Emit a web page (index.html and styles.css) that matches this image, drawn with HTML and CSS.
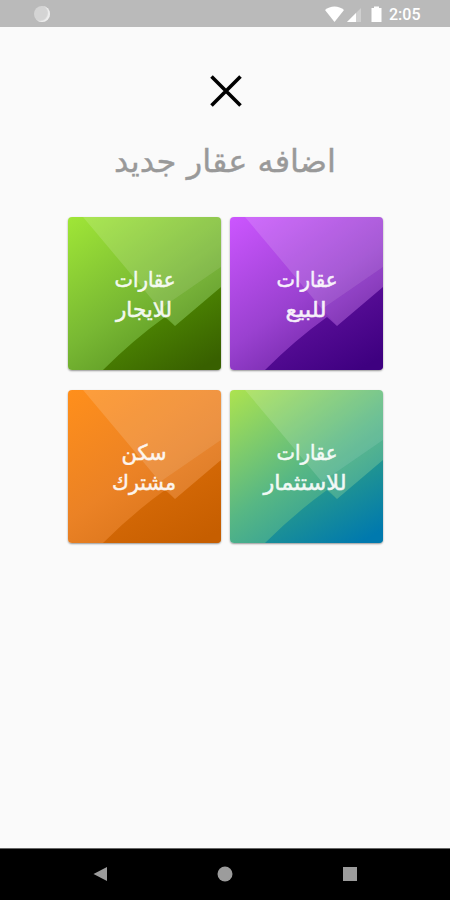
FILE: index.html
```html
<!DOCTYPE html>
<html lang="ar">
<head>
<meta charset="utf-8">
<title>اضافه عقار جديد</title>
<link rel="stylesheet" href="styles.css">
</head>
<body>
<header class="status">
  <span class="sync"></span>
  <svg class="signals" width="56" height="20" viewBox="0 0 56 20"><path class="wifi" d="M0 5C5 .3 14 .3 19 5L9.500 17Z"/><path class="faint" d="M22 17L36 3V17Z"/><path d="M22 17L31 8V17Z"/><path d="M46.500 3H49V1.500H54V3H56.500V17H46.500Z"/></svg>
  <span class="time">2:05</span>
</header>
<main class="content">
  <svg class="close" width="34" height="34" viewBox="0 0 34 34"><path d="M2.500 2.500L31.500 31.500M31.500 2.500L2.500 31.500"/></svg>
  <h1 class="title"><svg width="221" height="50"><text x="110" y="32" textLength="222" lengthAdjust="spacingAndGlyphs">اضافه عقار جديد</text></svg></h1>
  <div class="grid">
    <svg class="card green" viewBox="0 0 153 153"><defs><linearGradient id="g1" x1="0" y1="0" x2=".8" y2="1"><stop offset=".25" stop-color="#528f03"/><stop offset="1" stop-color="#386000"/></linearGradient></defs><path fill="url(#g1)" d="M35 153Q65 123 97 100L107 109L153 70V153Z"/><path class="light" d="M15 0H153V50L92 92L57 50Z"/><path class="mid" d="M92 92L107 109L153 70V50Z"/>
      <text x="77" y="69.500" textLength="61" lengthAdjust="spacingAndGlyphs">عقارات</text><text x="76" y="100" textLength="56" lengthAdjust="spacingAndGlyphs">للايجار</text></svg>
    <svg class="card purple" viewBox="0 0 153 153"><defs><linearGradient id="g2" x1="0" y1="0" x2=".8" y2="1"><stop offset=".25" stop-color="#60119e"/><stop offset="1" stop-color="#3e0080"/></linearGradient></defs><path fill="url(#g2)" d="M35 153Q65 123 97 100L107 109L153 70V153Z"/><path class="light" d="M15 0H153V50L92 92L57 50Z"/><path class="mid" d="M92 92L107 109L153 70V50Z"/>
      <text x="77" y="69.500" textLength="61" lengthAdjust="spacingAndGlyphs">عقارات</text><text x="76" y="100" textLength="41" lengthAdjust="spacingAndGlyphs">للبيع</text></svg>
    <svg class="card orange" viewBox="0 0 153 153"><defs><linearGradient id="g3" x1="0" y1="0" x2=".8" y2="1"><stop offset=".25" stop-color="#d96c08"/><stop offset="1" stop-color="#c65e00"/></linearGradient></defs><path fill="url(#g3)" d="M35 153Q65 123 97 100L107 109L153 70V153Z"/><path class="light" d="M15 0H153V50L92 92L57 50Z"/><path class="mid" d="M92 92L107 109L153 70V50Z"/>
      <text x="76" y="69.500" textLength="45" lengthAdjust="spacingAndGlyphs">سكن</text><text x="76" y="100" textLength="64" lengthAdjust="spacingAndGlyphs">مشترك</text></svg>
    <svg class="card teal" viewBox="0 0 153 153"><defs><linearGradient id="g4" x1="0" y1="0" x2=".8" y2="1"><stop offset=".25" stop-color="#30a185"/><stop offset="1" stop-color="#0079ae"/></linearGradient></defs><path fill="url(#g4)" d="M35 153Q65 123 97 100L107 109L153 70V153Z"/><path class="light" d="M15 0H153V50L92 92L57 50Z"/><path class="mid" d="M92 92L107 109L153 70V50Z"/>
      <text x="77" y="69.500" textLength="61" lengthAdjust="spacingAndGlyphs">عقارات</text><text x="75" y="100" textLength="83" lengthAdjust="spacingAndGlyphs">للاستثمار</text></svg>
  </div>
</main>
<nav class="nav">
  <svg width="16" height="16"><path d="M1.500 8L15 1V15Z"/></svg>
  <svg width="16" height="16"><circle cx="8" cy="8" r="7.500"/></svg>
  <svg width="16" height="16"><path d="M1 1H15V15H1Z"/></svg>
</nav>
</body>
</html>
```
FILE: styles.css
```css
* { box-sizing: border-box; }
body { margin: 0; height: 900px; display: flex; flex-direction: column; background: #fafafa; font-family: "DejaVu Sans", sans-serif; overflow: hidden; }
svg { display: block; }
.status { height: 27px; flex: none; background: #bababa; display: flex; align-items: center; padding: 0 30px 0 34px; color: #fff; }
.sync { width: 16px; height: 16px; border-radius: 50%; background: #d4d4d4; box-shadow: inset -2px -1px 1px #eee; }
.signals { margin-left: auto; fill: #fff; overflow: visible; margin-top: 3px; }
.faint { opacity: .3; }
.time { font: 500 16px/27px Roboto, sans-serif; margin-left: 8px; padding-top: 2px; width: 31px; }
.content { flex: 1; display: flex; flex-direction: column; align-items: center; padding: 47px 0 0 1px; }
.close { fill: none; stroke: #000; stroke-width: 3.6; }
.title { margin: 32px 0 0; height: 50px; font-weight: 400; }
.title svg { overflow: visible; }
.title text { font-size: 31px; fill: #999; stroke: #999; stroke-width: .4; }
text { text-anchor: middle; direction: rtl; }
.grid { display: grid; grid-template-columns: 153px 153px; gap: 20px 9px; margin-top: 27px; }
.card { width: 153px; height: 153px; border-radius: 4px; box-shadow: 0 1px 2px #0006; }
.card text { font-size: 21.5px; fill: #fff; stroke: #fff; stroke-width: .5; opacity: .92; }
.light { fill: #fff; opacity: .14; }
.mid { fill: #fff; opacity: .05; }
.green { background: linear-gradient(145deg, #a0e637 0%, #78b833 50%, #548d20 90%); }
.purple { background: linear-gradient(145deg, #cc56ff 0%, #9a41d0 50%, #65209c 90%); }
.orange { background: linear-gradient(145deg, #ff8f1b 0%, #eb8225 50%, #d5711a 90%); }
.teal { background: linear-gradient(145deg, #ade34f 0%, #57b784 50%, #2496a0 90%); }
.nav { height: 52px; flex: none; background: #000; border-top: 1px solid #666; display: flex; align-items: center; justify-content: space-between; padding: 0 92px 2px; fill: #9c9c9c; }
```
